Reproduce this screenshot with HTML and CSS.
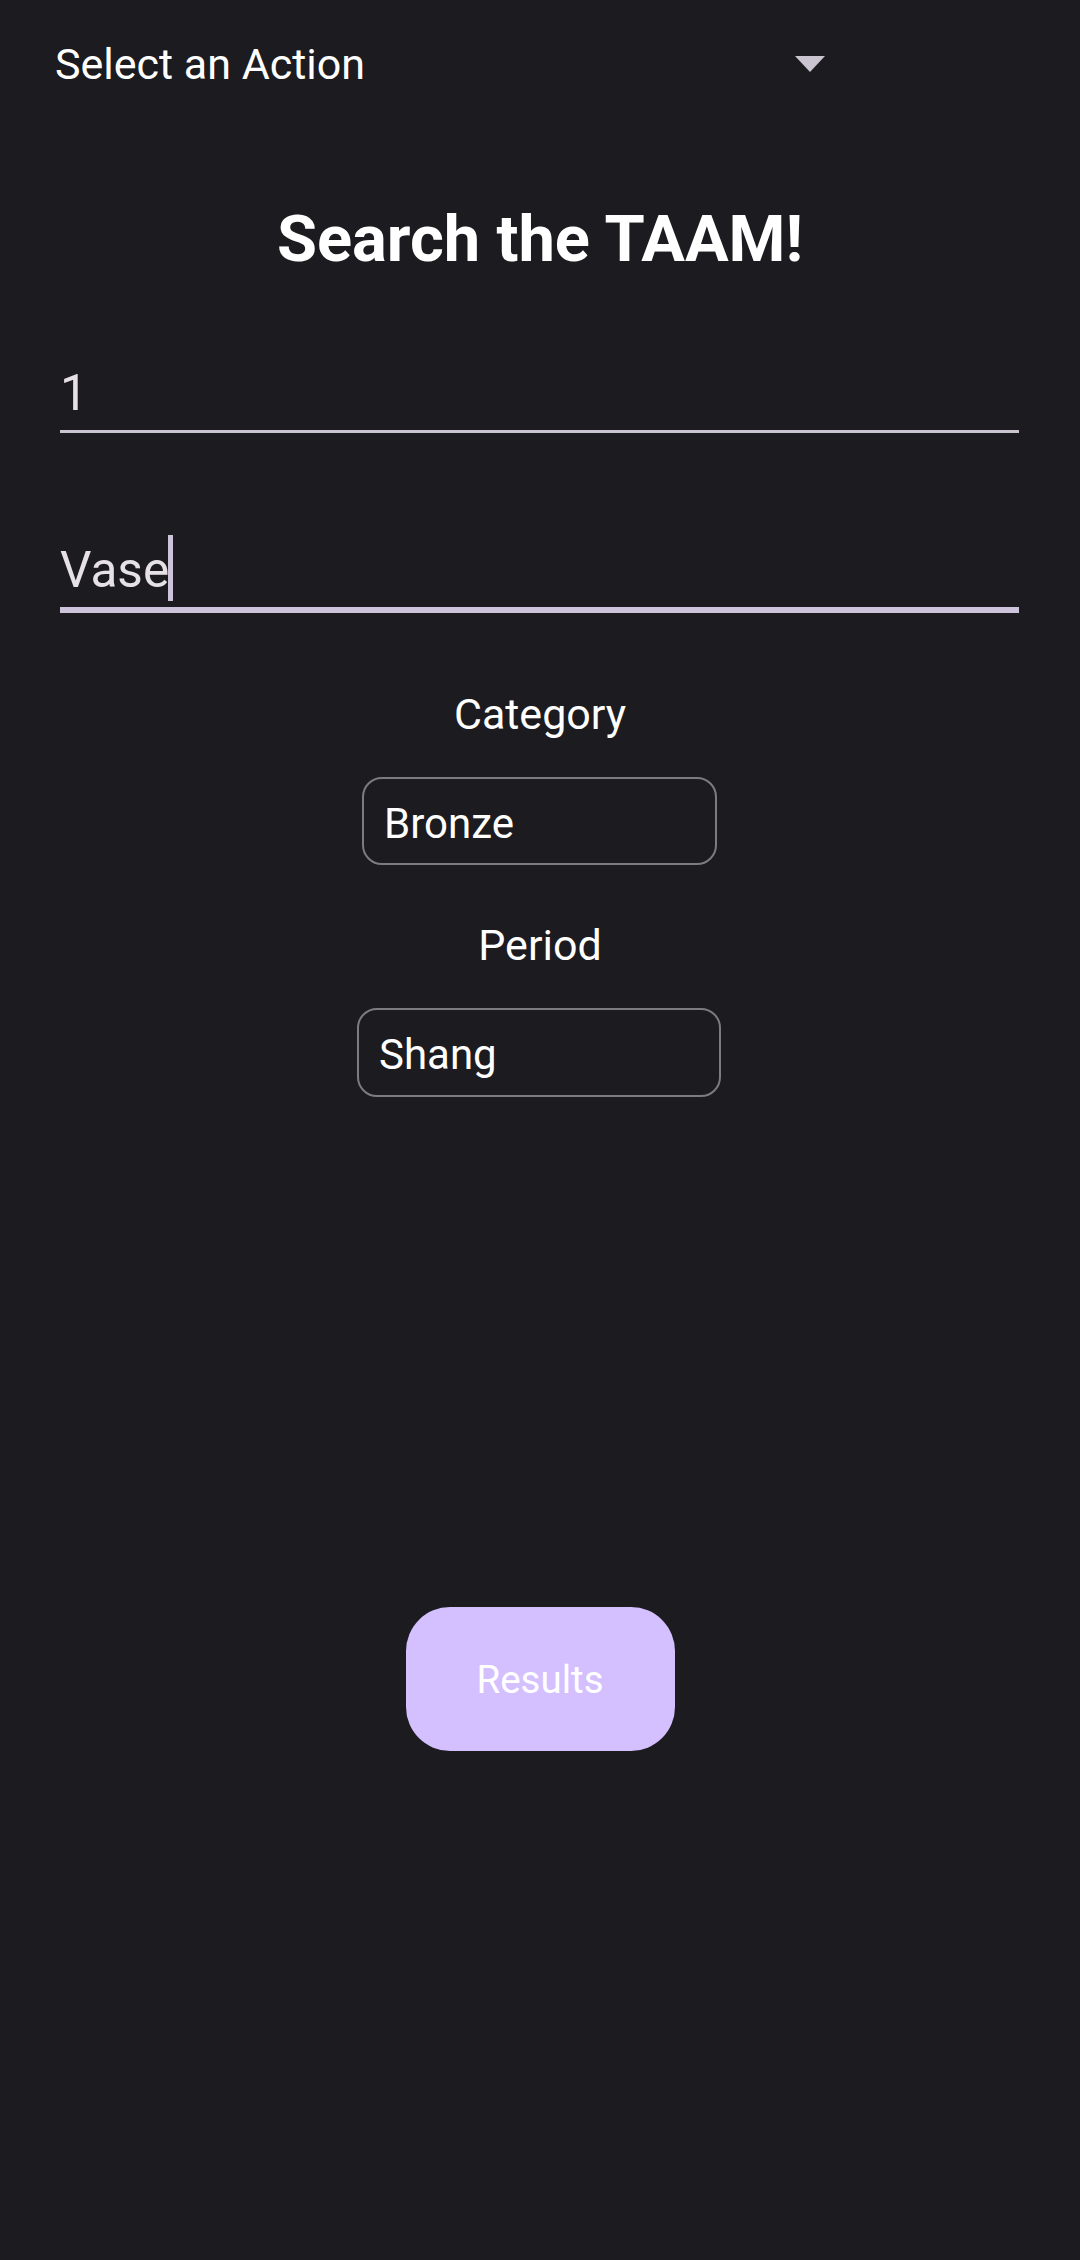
FILE: index.html
```html
<!DOCTYPE html>
<html lang="en">
<head>
<meta charset="utf-8">
<title>Search the TAAM!</title>
<link rel="stylesheet" href="styles.css">
</head>
<body>
<div class="screen">
  <div class="action-spinner">
    <span class="action-label">Select an Action</span>
    <svg class="action-arrow" width="30" height="16" viewBox="0 0 30 16"><path d="M0 0 H30 L15 16 Z" fill="#cac4d0"/></svg>
  </div>

  <h1 class="title">Search the TAAM!</h1>

  <div class="field field-lot">
    <span class="field-text">1</span>
  </div>

  <div class="field field-name focused">
    <span class="field-text">Vase</span><span class="caret"></span>
  </div>

  <div class="label label-category">Category</div>
  <div class="spinner spin-bronze"><span class="spinner-text">Bronze</span></div>

  <div class="label label-period">Period</div>
  <div class="spinner spin-shang"><span class="spinner-text">Shang</span></div>

  <button class="results-btn" type="button">Results</button>
</div>
</body>
</html>
```

FILE: styles.css
```css
html, body {
  margin: 0;
  padding: 0;
  background: #1c1b1f;
}

body {
  font-family: Roboto, "Noto Sans", "Liberation Sans", sans-serif;
  color: #ffffff;
}

.screen {
  width: 1080px;
  height: 2260px;
  display: flex;
  flex-direction: column;
  align-items: center;
}

.action-spinner {
  align-self: flex-start;
  box-sizing: border-box;
  width: 825px;
  margin-top: 38px;
  padding-left: 55px;
  display: flex;
  align-items: center;
  justify-content: space-between;
}

.action-label {
  font-size: 43px;
  line-height: 52px;
  color: #ffffff;
}

.action-arrow {
  display: block;
}

.title {
  margin: 110px 0 0 0;
  font-size: 65px;
  line-height: 78px;
  font-weight: 700;
  color: #ffffff;
  text-align: center;
}

.field {
  align-self: flex-start;
  box-sizing: border-box;
  width: 959px;
  margin-left: 60px;
  display: flex;
  align-items: flex-start;
  border-bottom: 3px solid #cac4d0;
  padding-bottom: 8px;
}

.field-lot {
  margin-top: 86px;
}

.field-name {
  margin-top: 108px;
  padding-bottom: 6px;
}

.field.focused {
  border-bottom: 6px solid #cdc4dc;
}

.field-text {
  font-size: 49.5px;
  line-height: 58px;
  color: #e6e1e5;
}

.caret {
  display: block;
  width: 5px;
  height: 66px;
  margin-top: -6px;
  margin-left: -1px;
  background: #cdc4dc;
}

.label {
  font-size: 43px;
  line-height: 52px;
  color: #ffffff;
  text-align: center;
}

.label-category {
  margin-top: 75px;
}

.label-period {
  margin-top: 54px;
}

.spinner {
  box-sizing: border-box;
  margin-top: 37px;
  border: 2px solid #7d7b81;
  border-radius: 20px;
  padding: 20px 20px 14px 20px;
}

.spin-bronze {
  width: 355px;
  height: 88px;
  margin-right: 1px;
}

.spin-shang {
  width: 364px;
  height: 89px;
  margin-right: 2px;
}

.spinner-text {
  display: block;
  font-size: 42px;
  line-height: 50px;
  color: #ffffff;
}

.results-btn {
  margin-top: 510px;
  width: 269px;
  height: 144px;
  border: none;
  border-radius: 44px;
  background: #d4bfff;
  color: #ffffff;
  font-family: Roboto, "Noto Sans", "Liberation Sans", sans-serif;
  font-size: 38.5px;
  padding: 0;
  display: flex;
  align-items: center;
  justify-content: center;
}
```
